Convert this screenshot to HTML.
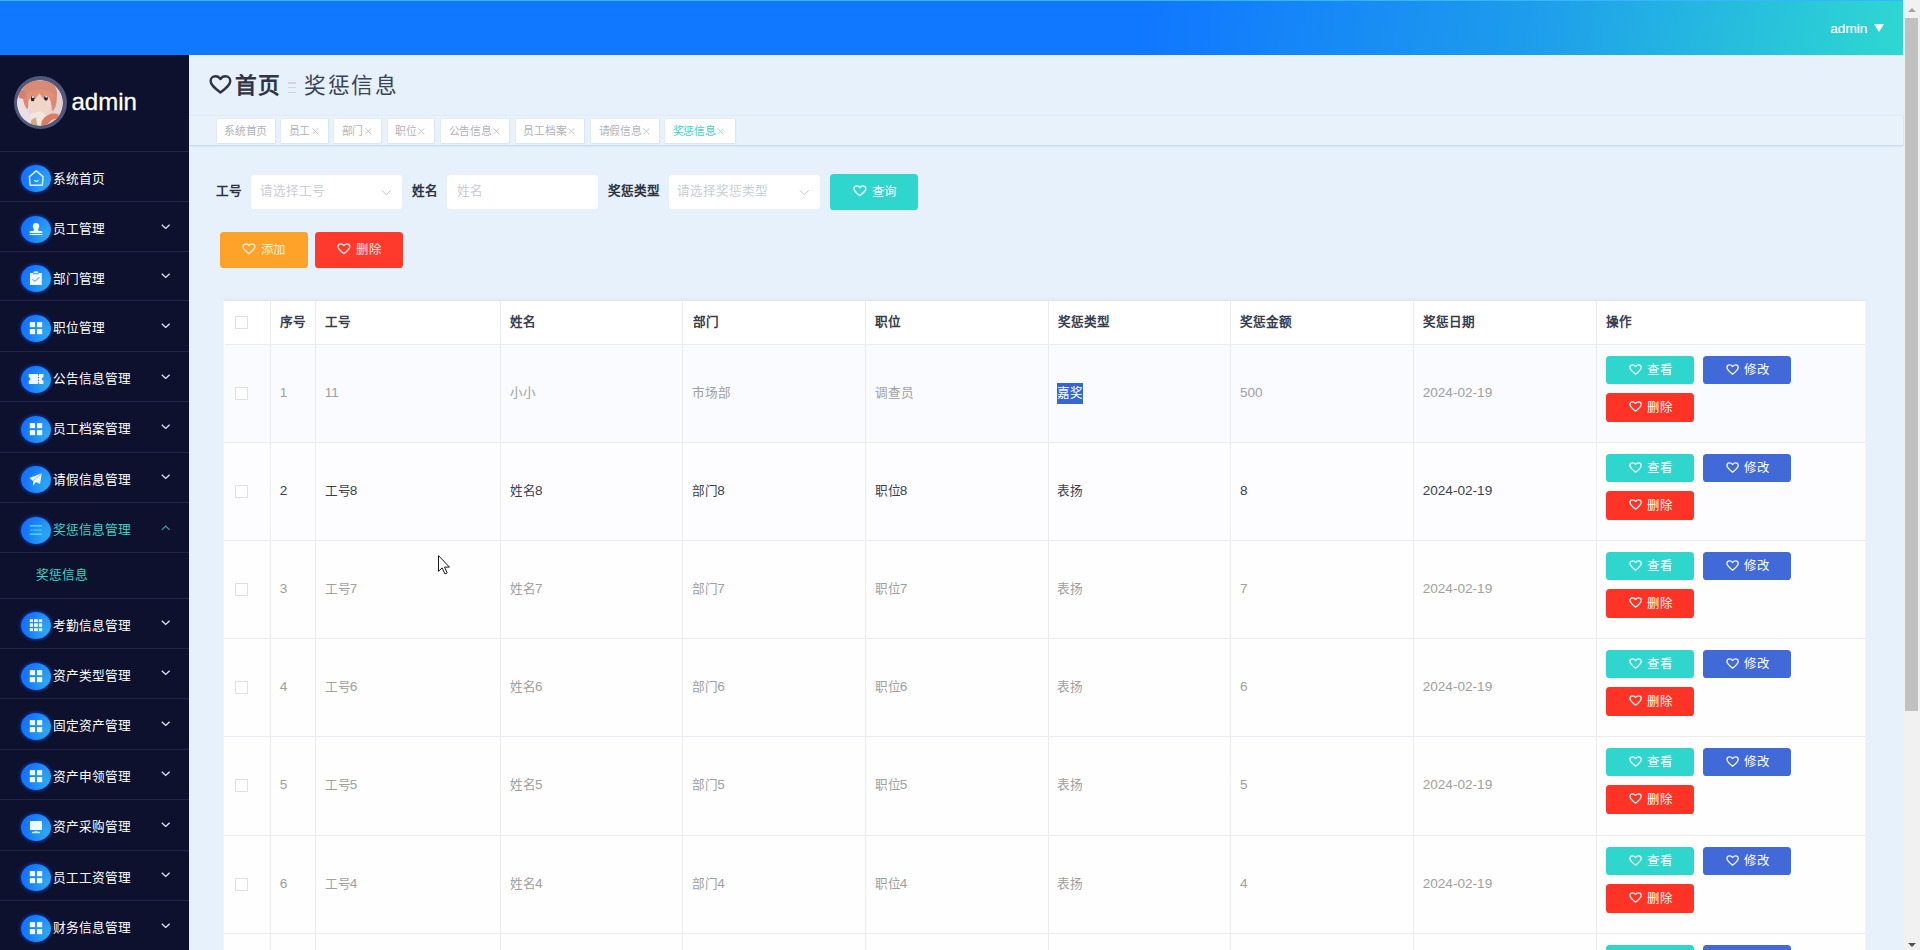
<!DOCTYPE html>
<html lang="zh-CN"><head><meta charset="utf-8"><title>奖惩信息</title>
<style>
*{box-sizing:border-box;margin:0;padding:0}
html,body{width:1920px;height:950px;overflow:hidden}
body{position:relative;background:#e6f1fb;font-family:"Liberation Sans",sans-serif;font-size:12.6px;color:#333}
.hdr{position:absolute;left:0;top:0;width:1903px;height:55px;background:linear-gradient(98deg,#1077ff 0%,#1077ff 60%,#1d9cec 80%,#2ed8d1 100%);border-top:1px solid #39b4ff}
.hu{position:absolute;left:1830.3px;top:19.7px;-webkit-text-stroke:.2px #fff;font-size:13.6px;line-height:16px;color:#fff}
.tri{position:absolute;left:1874px;top:23px;width:0;height:0;border-left:5.2px solid transparent;border-right:5.2px solid transparent;border-top:8px solid #fff}
.side{position:absolute;left:0;top:55px;width:189px;height:895px;background:#0d112d;overflow:hidden}
.ava{position:absolute;left:13.5px;top:20.8px;width:53.6px;height:53.6px;border-radius:50%;background:#52587a;padding:3.9px}
.face{display:block;width:100%;height:100%;border-radius:50%}
.uname{position:absolute;left:71.5px;top:31.6px;font-size:24px;line-height:30px;color:#fff;-webkit-text-stroke:.3px #fff}
.sep0{display:none}
.mi{position:absolute;left:0;width:189px;height:50px;border-top:1.3px solid #20254a;color:#fff}
.mi .ic{position:absolute;left:21.05px;top:13.5px;width:29.9px;height:27px;border-radius:50%;background:radial-gradient(ellipse 70% 75% at 88% 68%,#2ba7ee 0%,rgba(43,167,238,0) 100%),linear-gradient(100deg,#1371ff 0%,#197dff 50%,#2593f8 100%);box-shadow:0 0 3px 1.2px rgba(8,60,190,.75)}
.mi .ic svg{position:absolute;left:0;top:0;width:29.9px;height:27px}
.mi .mt{position:absolute;left:53.4px;top:17px;font-size:12.7px;line-height:20px;white-space:nowrap;font-weight:500;letter-spacing:-.1px}
.mi .chev{position:absolute;left:161.4px;top:21.4px;width:9.4px;height:5.6px;color:#e6e9f6}
.mi.act{color:#3ad5c6}
.mi.act .chev{color:#37a3a2;top:21.6px}
.sub{position:absolute;left:0;width:189px;height:45px;border-top:1.3px solid #20254a;color:#3ad5c6;padding-left:35.8px;font-size:12.7px;line-height:44px;white-space:nowrap}
.main{position:absolute;left:189px;top:55px;width:1715px;height:895px;overflow:hidden;background:#e6f1fb}
.bc{position:absolute;left:0;top:0;height:60px;width:100%}
.bh{position:absolute;left:19.7px;top:18.3px;width:22.9px;height:22.9px;color:#2f3445}
.b1{position:absolute;left:45.6px;top:14.6px;letter-spacing:1.7px;font-size:21.7px;line-height:32px;font-weight:700;color:#2f3446;white-space:nowrap}
.bsep{position:absolute;left:99.3px;top:27.4px;width:8px;height:14px}
.bsep i{display:block;height:1.2px;background:#cfd6e2;margin-bottom:3.6px}
.b2{position:absolute;left:115px;top:14.6px;letter-spacing:1.7px;font-size:21.7px;line-height:32px;color:#3c4256;white-space:nowrap}
.tabs{position:absolute;left:0;top:60px;width:1714px;height:30.4px;background:#e8f2fb;border-top:1px solid #e2edf8;box-shadow:0 1.2px 2px rgba(140,155,185,.36)}
.tab{position:absolute;top:3.2px;height:24.2px;background:#fff;box-shadow:0 0 1.5px .5px rgba(185,195,215,.8);font-size:10.8px;line-height:24px;color:#b0b3ba;white-space:nowrap;padding-left:7.5px;letter-spacing:-.2px}
.tab .x{display:inline-block;width:8.6px;height:8.6px;margin-left:.4px;vertical-align:-0.6px;color:#bcc0c7}
.tab.on{color:#3ed2c3}
.tab.on .x{color:#8fdcd4}
.flt{position:absolute;left:0;top:0;width:100%;height:0}
.lb{position:absolute;top:126px;font-weight:700;font-size:12.6px;line-height:20px;color:#2d3140;white-space:nowrap}
.inp{position:absolute;top:119.9px;height:33.9px;background:#fff;border-radius:3.6px;border:0;padding-left:8.8px;font-size:12.6px;line-height:33px;color:#cacdd4;white-space:nowrap}
.inp .dn{position:absolute;right:10.2px;top:14.4px;width:10.5px;height:7px}
.btn{position:absolute;height:35.7px;width:88px;border-radius:3.6px;color:#fff;font-size:12.6px;white-space:nowrap;display:flex;align-items:center;justify-content:center}
.btn .hrt{width:13.8px;height:13.8px;margin-right:4.9px;margin-left:-.6px;flex:none;position:relative;top:-.5px;opacity:.92}
.btn span{position:relative;top:-1px;font-weight:500;font-size:12.4px;letter-spacing:.9px;margin-right:-.9px}
.btn.s .hrt{top:-.4px;margin-left:.4px;width:13.2px;height:13.2px}
.btn.s span{top:.5px}
.btn.q{background:#2fd6cd;top:119px!important;padding-left:2px}
.btn.add{background:#ffa22a;top:177px!important;color:#fff1dc}
.btn.del{background:#ff3a2c;top:177px!important;color:#ffe6e2}
.tbl{position:absolute;left:35px;top:245px;width:1640.6px;box-shadow:-1px 0 1.5px rgba(255,255,255,.55),1px 0 1.5px rgba(255,255,255,.55),0 -1px 1.5px rgba(205,210,220,.45);height:660px;background:#fff;border-top:1px solid #e3e6ea;overflow:hidden}
.th{position:absolute;top:0;height:44px;background:#fff;border-bottom:1px solid #eaecf0;padding-left:9.9px;font-weight:700;color:#383d4e;line-height:42.4px;white-space:nowrap}
.tr{position:absolute;left:0;width:1641px;height:98.2px;border-bottom:1px solid #eaecf0;background:#fefefe;color:#a0a0a0}
.tr.r1{background:#fafbfe}
.tr.hov{color:#3a3f51;background:#fdfdff}
.td{position:absolute;top:0;height:97px;padding-left:9.3px;line-height:20.7px;padding-top:38.4px;white-space:nowrap}
.vl{position:absolute;top:0;width:1px;height:100%;background:#eaecf0}
.cb{position:absolute;left:10.3px;width:13px;height:12.8px;border:1px solid #dde0e6;background:#fff;border-radius:.5px}
.n{font-weight:inherit;font-size:13.6px}
.n.k{margin-left:-.9px}
.th .cb{top:15.2px}
.td .cb{top:42px}
.sel{background:#3367d1;color:#fff;display:inline-block;line-height:20.7px}
.ops .btn.s{width:88px;height:27.7px}
.ops .view{left:9.6px;top:11.2px;background:#2fd6cd}
.ops .edit{left:106.8px;top:11.2px;background:#4169d8}
.ops .btn.s.del2{left:9.6px;top:48.1px;background:#ff3326;height:28.6px}
.cursor{position:absolute;left:438px;top:555px;width:13px;height:20px}
.sb{position:absolute;left:1904px;top:0;width:16px;height:950px;background:#f1f1f1}
.sb .up{position:absolute;left:3.7px;top:7.8px;width:0;height:0;border-left:4px solid transparent;border-right:4px solid transparent;border-bottom:4.5px solid #a3a3a3}
.sb .down{position:absolute;left:3.7px;top:943.4px;width:0;height:0;border-left:4px solid transparent;border-right:4px solid transparent;border-top:4.5px solid #505050}
.sb .thumb{position:absolute;left:1px;top:18px;width:13px;height:693px;background:#c1c1c1}

</style></head>
<body>
<div class="hdr"><span class="hu">admin</span><span class="tri"></span></div>
<div class="side">
  <div class="ava"><svg class="face" viewBox="0 0 46 46"><defs><clipPath id="fc"><circle cx="23" cy="23" r="23"/></clipPath><filter id="bl" x="-10%" y="-10%" width="120%" height="120%"><feGaussianBlur stdDeviation=".8"/></filter><filter id="b2" x="-30%" y="-30%" width="160%" height="160%"><feGaussianBlur stdDeviation=".45"/></filter></defs><g clip-path="url(#fc)"><rect width="46" height="46" fill="#e6d6da"/><g filter="url(#bl)"><rect x="32" y="10" width="16" height="30" fill="#e5d2d0"/><path d="M-2 18 L9 18 L15 46 L-2 46 Z" fill="#eadfe6"/><path d="M6 16 C3 7 11 0 23 0.5 C35 0 42 7 40 17 C40 24 38.5 29 35.5 31.5 L34 22 L12.5 22 L10.5 29.5 C7.5 26.5 6 21 6 16 Z" fill="#d98a74"/><ellipse cx="5" cy="14.5" rx="3.4" ry="4.4" fill="#d57f68"/><ellipse cx="22.6" cy="23.6" rx="11.4" ry="10.4" fill="#f1d5c9"/><path d="M9.5 16.5 C12 8.5 31 6.5 37.5 16 L34.5 19.5 L30 14.5 L26.5 19 L22.5 13.5 L18 19.5 L15 14.5 L11 20.5 Z" fill="#df917a"/><path d="M14 33.5 L24 31.5 L33 38 L30 46 L12 46 Z" fill="#f4e5dd"/><path d="M25 41 C29.5 34.5 35.5 32.5 41.5 34.5 L42 39 C37 38 33 40.5 30 46 L24 46 Z" fill="#dd7c62"/><path d="M14.5 40 L19 37.5 L20.5 46 L13 46 Z" fill="#cdab84"/></g><g filter="url(#b2)"><ellipse cx="15.7" cy="18.6" rx="1.9" ry="2.7" fill="#34242f"/><ellipse cx="29.1" cy="18.2" rx="1.9" ry="2.7" fill="#34242f"/><ellipse cx="16" cy="17" rx="1.1" ry=".95" fill="#fbf5f6"/><ellipse cx="29.4" cy="16.6" rx="1.1" ry=".95" fill="#fbf5f6"/></g></g></svg></div>
  <div class="uname">admin</div>
  <div class="sep0"></div>
<div class="mi" style="top:95.65px"><span class="ic"><svg viewBox="0 0 30 27"><path d="M8.5 11.6 L15.3 5.9 L22.1 11.6 L21.4 20.2 L9.2 20.2 Z" fill="none" stroke="#d4f3ff" stroke-width="1.45" stroke-linejoin="round"/><path d="M13.4 15.6 Q15.3 17.2 17.2 15.6" fill="none" stroke="#d4f3ff" stroke-width="1.3" stroke-linecap="round"/></svg></span><span class="mt">系统首页</span></div>
<div class="mi" style="top:146.15px"><span class="ic"><svg viewBox="0 0 30 27"><g fill="#eefaff"><ellipse cx="15.1" cy="10.3" rx="3.2" ry="3.4"/><path d="M13 12 h4.2 v2 c0 .7 .5 1 1.6 1 h1.6 c.7 0 1 .4 1 1 v.9 H8.8 V16 c0 -.6 .3 -1 1 -1 h1.6 c1.1 0 1.6 -.3 1.6 -1 Z"/><rect x="8.8" y="17.9" width="12.6" height="1.15"/></g></svg></span><span class="mt">员工管理</span><svg class="chev" viewBox="0 0 10 6"><path d="M.8 .8 L5 4.8 L9.2 .8" fill="none" stroke="currentColor" stroke-width="1.35"/></svg></div>
<div class="mi" style="top:195.75px"><span class="ic"><svg viewBox="0 0 30 27"><rect x="9.05" y="8" width="11.8" height="12" fill="#eefaff"/><path d="M12.65 8.7 v-1.4 c0 -.8 .5 -1.2 1.2 -1.2 h2.2 c.7 0 1.2 .4 1.2 1.2 v1.4 Z" fill="#c9f3ff"/><path d="M11.9 8.75 h6.1" stroke="#2a6fd8" stroke-width=".8"/><path d="M11.8 14.6 l2.2 1.6 l4.2 -3.7" fill="none" stroke="#8ea9d6" stroke-width="1.1" stroke-linecap="round" stroke-linejoin="round"/></svg></span><span class="mt">部门管理</span><svg class="chev" viewBox="0 0 10 6"><path d="M.8 .8 L5 4.8 L9.2 .8" fill="none" stroke="currentColor" stroke-width="1.35"/></svg></div>
<div class="mi" style="top:245.25px"><span class="ic"><svg viewBox="0 0 30 27"><g fill="#eefaff"><rect x="8.85" y="7.1" width="5.3" height="5.1"/><rect x="16" y="7.1" width="5.3" height="5.1"/><rect x="8.85" y="14.1" width="5.3" height="5.1"/><rect x="16" y="14.1" width="5.3" height="5.1"/></g></svg></span><span class="mt">职位管理</span><svg class="chev" viewBox="0 0 10 6"><path d="M.8 .8 L5 4.8 L9.2 .8" fill="none" stroke="currentColor" stroke-width="1.35"/></svg></div>
<div class="mi" style="top:296.35px"><span class="ic"><svg viewBox="0 0 30 27"><path d="M7.8 8 h14.7 v3.3 a1.65 1.65 0 0 0 0 3.3 v3.3 h-14.7 v-3.3 a1.65 1.65 0 0 0 0 -3.3 Z" fill="#eefaff"/><path d="M17.5 8 v9.9" stroke="#2a55b8" stroke-width=".9" stroke-dasharray="1.5 1.3"/></svg></span><span class="mt">公告信息管理</span><svg class="chev" viewBox="0 0 10 6"><path d="M.8 .8 L5 4.8 L9.2 .8" fill="none" stroke="currentColor" stroke-width="1.35"/></svg></div>
<div class="mi" style="top:346.35px"><span class="ic"><svg viewBox="0 0 30 27"><g fill="#eefaff"><rect x="8.85" y="7.1" width="5.3" height="5.1"/><rect x="16" y="7.1" width="5.3" height="5.1"/><rect x="8.85" y="14.1" width="5.3" height="5.1"/><rect x="16" y="14.1" width="5.3" height="5.1"/></g></svg></span><span class="mt">员工档案管理</span><svg class="chev" viewBox="0 0 10 6"><path d="M.8 .8 L5 4.8 L9.2 .8" fill="none" stroke="currentColor" stroke-width="1.35"/></svg></div>
<div class="mi" style="top:396.95px"><span class="ic"><svg viewBox="0 0 30 27"><path d="M8.4 12.1 L20.9 7.2 L19.1 17.9 L15 15.9 L12.3 19.8 L12.1 14.9 Z" fill="#eefaff"/><path d="M20.3 7.9 L12.3 14.6" stroke="#5aa0e8" stroke-width=".7" fill="none"/><path d="M12.3 15.2 L14.8 16.3 L12.5 19.3 Z" fill="#cfeaff"/></svg></span><span class="mt">请假信息管理</span><svg class="chev" viewBox="0 0 10 6"><path d="M.8 .8 L5 4.8 L9.2 .8" fill="none" stroke="currentColor" stroke-width="1.35"/></svg></div>
<div class="mi act" style="top:447.35px"><span class="ic"><svg viewBox="0 0 30 27"><rect x="8.85" y="8" width="12.2" height="1.5" fill="#52d0ff"/><rect x="12.2" y="12.1" width="8.85" height="1.9" fill="#38b6ee"/><path d="M8.9 13 L11.4 11.3 L11.4 14.7 Z" fill="#38b6ee"/><rect x="8.85" y="16.5" width="12.2" height="1.5" fill="#52d0ff"/></svg></span><span class="mt">奖惩信息管理</span><svg class="chev" viewBox="0 0 10 6"><path d="M.8 5.2 L5 1.2 L9.2 5.2" fill="none" stroke="currentColor" stroke-width="1.35"/></svg></div>
<div class="sub" style="top:497.25px">奖惩信息</div>
<div class="mi" style="top:542.75px"><span class="ic"><svg viewBox="0 0 30 27"><g fill="#eefaff"><rect x="8.85" y="7.2" width="3.15" height="2.9"/><rect x="13.05" y="7.2" width="3.8" height="2.9"/><rect x="17.9" y="7.2" width="3.35" height="2.9"/><rect x="8.85" y="11.3" width="3.15" height="3.6"/><rect x="13.05" y="11.3" width="3.8" height="3.6"/><rect x="17.9" y="11.3" width="3.35" height="3.6"/><rect x="8.85" y="16.2" width="3.15" height="3.0"/><rect x="13.05" y="16.2" width="3.8" height="3.0"/><rect x="17.9" y="16.2" width="3.35" height="3.0"/></g></svg></span><span class="mt">考勤信息管理</span><svg class="chev" viewBox="0 0 10 6"><path d="M.8 .8 L5 4.8 L9.2 .8" fill="none" stroke="currentColor" stroke-width="1.35"/></svg></div>
<div class="mi" style="top:593.05px"><span class="ic"><svg viewBox="0 0 30 27"><g fill="#eefaff"><rect x="8.85" y="7.1" width="5.3" height="5.1"/><rect x="16" y="7.1" width="5.3" height="5.1"/><rect x="8.85" y="14.1" width="5.3" height="5.1"/><rect x="16" y="14.1" width="5.3" height="5.1"/></g></svg></span><span class="mt">资产类型管理</span><svg class="chev" viewBox="0 0 10 6"><path d="M.8 .8 L5 4.8 L9.2 .8" fill="none" stroke="currentColor" stroke-width="1.35"/></svg></div>
<div class="mi" style="top:643.35px"><span class="ic"><svg viewBox="0 0 30 27"><g fill="#eefaff"><rect x="8.85" y="7.1" width="5.3" height="5.1"/><rect x="16" y="7.1" width="5.3" height="5.1"/><rect x="8.85" y="14.1" width="5.3" height="5.1"/><rect x="16" y="14.1" width="5.3" height="5.1"/></g></svg></span><span class="mt">固定资产管理</span><svg class="chev" viewBox="0 0 10 6"><path d="M.8 .8 L5 4.8 L9.2 .8" fill="none" stroke="currentColor" stroke-width="1.35"/></svg></div>
<div class="mi" style="top:693.85px"><span class="ic"><svg viewBox="0 0 30 27"><g fill="#eefaff"><rect x="8.85" y="7.1" width="5.3" height="5.1"/><rect x="16" y="7.1" width="5.3" height="5.1"/><rect x="8.85" y="14.1" width="5.3" height="5.1"/><rect x="16" y="14.1" width="5.3" height="5.1"/></g></svg></span><span class="mt">资产申领管理</span><svg class="chev" viewBox="0 0 10 6"><path d="M.8 .8 L5 4.8 L9.2 .8" fill="none" stroke="currentColor" stroke-width="1.35"/></svg></div>
<div class="mi" style="top:744.25px"><span class="ic"><svg viewBox="0 0 30 27"><g fill="#eefaff"><rect x="9.05" y="7" width="12" height="9"/><path d="M10.95 19.2 v-1.5 h2.2 c.5 0 .7 -.3 .9 -.7 h2 c.2 .4 .4 .7 .9 .7 h2.2 v1.5 Z" fill="#bff4ff"/></g></svg></span><span class="mt">资产采购管理</span><svg class="chev" viewBox="0 0 10 6"><path d="M.8 .8 L5 4.8 L9.2 .8" fill="none" stroke="currentColor" stroke-width="1.35"/></svg></div>
<div class="mi" style="top:794.75px"><span class="ic"><svg viewBox="0 0 30 27"><g fill="#eefaff"><rect x="8.85" y="7.1" width="5.3" height="5.1"/><rect x="16" y="7.1" width="5.3" height="5.1"/><rect x="8.85" y="14.1" width="5.3" height="5.1"/><rect x="16" y="14.1" width="5.3" height="5.1"/></g></svg></span><span class="mt">员工工资管理</span><svg class="chev" viewBox="0 0 10 6"><path d="M.8 .8 L5 4.8 L9.2 .8" fill="none" stroke="currentColor" stroke-width="1.35"/></svg></div>
<div class="mi" style="top:845.15px"><span class="ic"><svg viewBox="0 0 30 27"><g fill="#eefaff"><rect x="8.85" y="7.1" width="5.3" height="5.1"/><rect x="16" y="7.1" width="5.3" height="5.1"/><rect x="8.85" y="14.1" width="5.3" height="5.1"/><rect x="16" y="14.1" width="5.3" height="5.1"/></g></svg></span><span class="mt">财务信息管理</span><svg class="chev" viewBox="0 0 10 6"><path d="M.8 .8 L5 4.8 L9.2 .8" fill="none" stroke="currentColor" stroke-width="1.35"/></svg></div>

</div>
<div class="main">
  <div class="bc"><svg class="bh" viewBox="0 0 24 24"><path d="M12 20.4 C5 15 1.7 12 1.7 8.3 C1.7 5.3 4 3.4 6.7 3.4 C8.9 3.4 10.8 4.5 12 6.4 C13.2 4.5 15.1 3.4 17.3 3.4 C20 3.4 22.3 5.3 22.3 8.3 C22.3 12 19 15 12 20.4 Z" fill="none" stroke="currentColor" stroke-width="2.5" stroke-linejoin="round"/></svg><span class="b1">首页</span><span class="bsep"><i></i><i></i><i></i></span><span class="b2">奖惩信息</span></div>
  <div class="tabs"><div class="tab" style="left:27.6px;width:58.4px"><span>系统首页</span></div><div class="tab" style="left:92.0px;width:47.1px"><span>员工</span><svg class="x" viewBox="0 0 10 10"><path d="M1.5 1.5 L8.5 8.5 M8.5 1.5 L1.5 8.5" stroke="currentColor" stroke-width="1" fill="none"/></svg></div><div class="tab" style="left:145.0px;width:47.2px"><span>部门</span><svg class="x" viewBox="0 0 10 10"><path d="M1.5 1.5 L8.5 8.5 M8.5 1.5 L1.5 8.5" stroke="currentColor" stroke-width="1" fill="none"/></svg></div><div class="tab" style="left:198.9px;width:46.3px"><span>职位</span><svg class="x" viewBox="0 0 10 10"><path d="M1.5 1.5 L8.5 8.5 M8.5 1.5 L1.5 8.5" stroke="currentColor" stroke-width="1" fill="none"/></svg></div><div class="tab" style="left:252.0px;width:68.2px"><span>公告信息</span><svg class="x" viewBox="0 0 10 10"><path d="M1.5 1.5 L8.5 8.5 M8.5 1.5 L1.5 8.5" stroke="currentColor" stroke-width="1" fill="none"/></svg></div><div class="tab" style="left:326.9px;width:68.2px"><span>员工档案</span><svg class="x" viewBox="0 0 10 10"><path d="M1.5 1.5 L8.5 8.5 M8.5 1.5 L1.5 8.5" stroke="currentColor" stroke-width="1" fill="none"/></svg></div><div class="tab" style="left:402.2px;width:67.8px"><span>请假信息</span><svg class="x" viewBox="0 0 10 10"><path d="M1.5 1.5 L8.5 8.5 M8.5 1.5 L1.5 8.5" stroke="currentColor" stroke-width="1" fill="none"/></svg></div><div class="tab on" style="left:476.0px;width:69.5px"><span>奖惩信息</span><svg class="x" viewBox="0 0 10 10"><path d="M1.5 1.5 L8.5 8.5 M8.5 1.5 L1.5 8.5" stroke="currentColor" stroke-width="1" fill="none"/></svg></div></div>
  <div class="flt">
    <span class="lb" style="left:27px">工号</span>
    <div class="inp" style="left:62px;width:151px"><span>请选择工号</span><svg class="dn" viewBox="0 0 12 8"><path d="M1 1.5 L6 6.5 L11 1.5" fill="none" stroke="#c0c4cc" stroke-width="1.1"/></svg></div>
    <span class="lb" style="left:223px">姓名</span>
    <div class="inp" style="left:257.8px;width:150.8px;padding-left:10.5px"><span>姓名</span></div>
    <span class="lb" style="left:419.3px">奖惩类型</span>
    <div class="inp" style="left:479.5px;width:151px"><span>请选择奖惩类型</span><svg class="dn" viewBox="0 0 12 8"><path d="M1 1.5 L6 6.5 L11 1.5" fill="none" stroke="#c0c4cc" stroke-width="1.1"/></svg></div>
    <div class="btn q" style="left:641px;top:174px"><svg class="hrt" viewBox="0 0 24 24"><path d="M12 20.4 C5 15 1.7 12 1.7 8.3 C1.7 5.3 4 3.4 6.7 3.4 C8.9 3.4 10.8 4.5 12 6.4 C13.2 4.5 15.1 3.4 17.3 3.4 C20 3.4 22.3 5.3 22.3 8.3 C22.3 12 19 15 12 20.4 Z" fill="none" stroke="currentColor" stroke-width="2.5" stroke-linejoin="round"/></svg><span>查询</span></div>
  </div>
  <div class="btn add" style="left:31px;top:232px"><svg class="hrt" viewBox="0 0 24 24"><path d="M12 20.4 C5 15 1.7 12 1.7 8.3 C1.7 5.3 4 3.4 6.7 3.4 C8.9 3.4 10.8 4.5 12 6.4 C13.2 4.5 15.1 3.4 17.3 3.4 C20 3.4 22.3 5.3 22.3 8.3 C22.3 12 19 15 12 20.4 Z" fill="none" stroke="currentColor" stroke-width="2.5" stroke-linejoin="round"/></svg><span>添加</span></div>
  <div class="btn del" style="left:126.4px;top:232px"><svg class="hrt" viewBox="0 0 24 24"><path d="M12 20.4 C5 15 1.7 12 1.7 8.3 C1.7 5.3 4 3.4 6.7 3.4 C8.9 3.4 10.8 4.5 12 6.4 C13.2 4.5 15.1 3.4 17.3 3.4 C20 3.4 22.3 5.3 22.3 8.3 C22.3 12 19 15 12 20.4 Z" fill="none" stroke="currentColor" stroke-width="2.5" stroke-linejoin="round"/></svg><span>删除</span></div>
  <div class="tbl"><div class="th" style="left:1.0px;width:45.4px"><span class="cb"></span></div><div class="th" style="left:46.4px;width:45.0px"><span class="ht">序号</span></div><div class="th" style="left:91.4px;width:185.2px"><span class="ht">工号</span></div><div class="th" style="left:276.6px;width:182.2px"><span class="ht">姓名</span></div><div class="th" style="left:458.8px;width:182.6px"><span class="ht">部门</span></div><div class="th" style="left:641.4px;width:182.6px"><span class="ht">职位</span></div><div class="th" style="left:824.0px;width:182.6px"><span class="ht">奖惩类型</span></div><div class="th" style="left:1006.6px;width:182.8px"><span class="ht">奖惩金额</span></div><div class="th" style="left:1189.4px;width:183.0px"><span class="ht">奖惩日期</span></div><div class="th" style="left:1372.4px;width:268.6px"><span class="ht">操作</span></div><div class="tr r1" style="top:44.00px;height:98.00px"><div class="td" style="left:1.0px;width:45.4px"><span class="cb"></span></div><div class="td" style="left:46.4px;width:45.0px"><span><b class="n">1</b></span></div><div class="td" style="left:91.4px;width:185.2px"><span><b class="n">11</b></span></div><div class="td" style="left:276.6px;width:182.2px"><span>小小</span></div><div class="td" style="left:458.8px;width:182.6px"><span>市场部</span></div><div class="td" style="left:641.4px;width:182.6px"><span>调查员</span></div><div class="td" style="left:824.0px;width:182.6px"><span class="sel">嘉奖</span></div><div class="td" style="left:1006.6px;width:182.8px"><span><b class="n">500</b></span></div><div class="td" style="left:1189.4px;width:183.0px"><span><b class="n">2024-02-19</b></span></div><div class="td ops" style="left:1372.4px;width:268.6px"><div class="btn s view"><svg class="hrt" viewBox="0 0 24 24"><path d="M12 20.4 C5 15 1.7 12 1.7 8.3 C1.7 5.3 4 3.4 6.7 3.4 C8.9 3.4 10.8 4.5 12 6.4 C13.2 4.5 15.1 3.4 17.3 3.4 C20 3.4 22.3 5.3 22.3 8.3 C22.3 12 19 15 12 20.4 Z" fill="none" stroke="currentColor" stroke-width="2.5" stroke-linejoin="round"/></svg><span>查看</span></div><div class="btn s edit"><svg class="hrt" viewBox="0 0 24 24"><path d="M12 20.4 C5 15 1.7 12 1.7 8.3 C1.7 5.3 4 3.4 6.7 3.4 C8.9 3.4 10.8 4.5 12 6.4 C13.2 4.5 15.1 3.4 17.3 3.4 C20 3.4 22.3 5.3 22.3 8.3 C22.3 12 19 15 12 20.4 Z" fill="none" stroke="currentColor" stroke-width="2.5" stroke-linejoin="round"/></svg><span>修改</span></div><div class="btn s del2"><svg class="hrt" viewBox="0 0 24 24"><path d="M12 20.4 C5 15 1.7 12 1.7 8.3 C1.7 5.3 4 3.4 6.7 3.4 C8.9 3.4 10.8 4.5 12 6.4 C13.2 4.5 15.1 3.4 17.3 3.4 C20 3.4 22.3 5.3 22.3 8.3 C22.3 12 19 15 12 20.4 Z" fill="none" stroke="currentColor" stroke-width="2.5" stroke-linejoin="round"/></svg><span>删除</span></div></div></div><div class="tr hov" style="top:142.00px;height:98.00px"><div class="td" style="left:1.0px;width:45.4px"><span class="cb"></span></div><div class="td" style="left:46.4px;width:45.0px"><span><b class="n">2</b></span></div><div class="td" style="left:91.4px;width:185.2px"><span>工号<b class="n k">8</b></span></div><div class="td" style="left:276.6px;width:182.2px"><span>姓名<b class="n k">8</b></span></div><div class="td" style="left:458.8px;width:182.6px"><span>部门<b class="n k">8</b></span></div><div class="td" style="left:641.4px;width:182.6px"><span>职位<b class="n k">8</b></span></div><div class="td" style="left:824.0px;width:182.6px"><span>表扬</span></div><div class="td" style="left:1006.6px;width:182.8px"><span><b class="n">8</b></span></div><div class="td" style="left:1189.4px;width:183.0px"><span><b class="n">2024-02-19</b></span></div><div class="td ops" style="left:1372.4px;width:268.6px"><div class="btn s view"><svg class="hrt" viewBox="0 0 24 24"><path d="M12 20.4 C5 15 1.7 12 1.7 8.3 C1.7 5.3 4 3.4 6.7 3.4 C8.9 3.4 10.8 4.5 12 6.4 C13.2 4.5 15.1 3.4 17.3 3.4 C20 3.4 22.3 5.3 22.3 8.3 C22.3 12 19 15 12 20.4 Z" fill="none" stroke="currentColor" stroke-width="2.5" stroke-linejoin="round"/></svg><span>查看</span></div><div class="btn s edit"><svg class="hrt" viewBox="0 0 24 24"><path d="M12 20.4 C5 15 1.7 12 1.7 8.3 C1.7 5.3 4 3.4 6.7 3.4 C8.9 3.4 10.8 4.5 12 6.4 C13.2 4.5 15.1 3.4 17.3 3.4 C20 3.4 22.3 5.3 22.3 8.3 C22.3 12 19 15 12 20.4 Z" fill="none" stroke="currentColor" stroke-width="2.5" stroke-linejoin="round"/></svg><span>修改</span></div><div class="btn s del2"><svg class="hrt" viewBox="0 0 24 24"><path d="M12 20.4 C5 15 1.7 12 1.7 8.3 C1.7 5.3 4 3.4 6.7 3.4 C8.9 3.4 10.8 4.5 12 6.4 C13.2 4.5 15.1 3.4 17.3 3.4 C20 3.4 22.3 5.3 22.3 8.3 C22.3 12 19 15 12 20.4 Z" fill="none" stroke="currentColor" stroke-width="2.5" stroke-linejoin="round"/></svg><span>删除</span></div></div></div><div class="tr" style="top:240.00px;height:98.00px"><div class="td" style="left:1.0px;width:45.4px"><span class="cb"></span></div><div class="td" style="left:46.4px;width:45.0px"><span><b class="n">3</b></span></div><div class="td" style="left:91.4px;width:185.2px"><span>工号<b class="n k">7</b></span></div><div class="td" style="left:276.6px;width:182.2px"><span>姓名<b class="n k">7</b></span></div><div class="td" style="left:458.8px;width:182.6px"><span>部门<b class="n k">7</b></span></div><div class="td" style="left:641.4px;width:182.6px"><span>职位<b class="n k">7</b></span></div><div class="td" style="left:824.0px;width:182.6px"><span>表扬</span></div><div class="td" style="left:1006.6px;width:182.8px"><span><b class="n">7</b></span></div><div class="td" style="left:1189.4px;width:183.0px"><span><b class="n">2024-02-19</b></span></div><div class="td ops" style="left:1372.4px;width:268.6px"><div class="btn s view"><svg class="hrt" viewBox="0 0 24 24"><path d="M12 20.4 C5 15 1.7 12 1.7 8.3 C1.7 5.3 4 3.4 6.7 3.4 C8.9 3.4 10.8 4.5 12 6.4 C13.2 4.5 15.1 3.4 17.3 3.4 C20 3.4 22.3 5.3 22.3 8.3 C22.3 12 19 15 12 20.4 Z" fill="none" stroke="currentColor" stroke-width="2.5" stroke-linejoin="round"/></svg><span>查看</span></div><div class="btn s edit"><svg class="hrt" viewBox="0 0 24 24"><path d="M12 20.4 C5 15 1.7 12 1.7 8.3 C1.7 5.3 4 3.4 6.7 3.4 C8.9 3.4 10.8 4.5 12 6.4 C13.2 4.5 15.1 3.4 17.3 3.4 C20 3.4 22.3 5.3 22.3 8.3 C22.3 12 19 15 12 20.4 Z" fill="none" stroke="currentColor" stroke-width="2.5" stroke-linejoin="round"/></svg><span>修改</span></div><div class="btn s del2"><svg class="hrt" viewBox="0 0 24 24"><path d="M12 20.4 C5 15 1.7 12 1.7 8.3 C1.7 5.3 4 3.4 6.7 3.4 C8.9 3.4 10.8 4.5 12 6.4 C13.2 4.5 15.1 3.4 17.3 3.4 C20 3.4 22.3 5.3 22.3 8.3 C22.3 12 19 15 12 20.4 Z" fill="none" stroke="currentColor" stroke-width="2.5" stroke-linejoin="round"/></svg><span>删除</span></div></div></div><div class="tr" style="top:338.00px;height:98.00px"><div class="td" style="left:1.0px;width:45.4px"><span class="cb"></span></div><div class="td" style="left:46.4px;width:45.0px"><span><b class="n">4</b></span></div><div class="td" style="left:91.4px;width:185.2px"><span>工号<b class="n k">6</b></span></div><div class="td" style="left:276.6px;width:182.2px"><span>姓名<b class="n k">6</b></span></div><div class="td" style="left:458.8px;width:182.6px"><span>部门<b class="n k">6</b></span></div><div class="td" style="left:641.4px;width:182.6px"><span>职位<b class="n k">6</b></span></div><div class="td" style="left:824.0px;width:182.6px"><span>表扬</span></div><div class="td" style="left:1006.6px;width:182.8px"><span><b class="n">6</b></span></div><div class="td" style="left:1189.4px;width:183.0px"><span><b class="n">2024-02-19</b></span></div><div class="td ops" style="left:1372.4px;width:268.6px"><div class="btn s view"><svg class="hrt" viewBox="0 0 24 24"><path d="M12 20.4 C5 15 1.7 12 1.7 8.3 C1.7 5.3 4 3.4 6.7 3.4 C8.9 3.4 10.8 4.5 12 6.4 C13.2 4.5 15.1 3.4 17.3 3.4 C20 3.4 22.3 5.3 22.3 8.3 C22.3 12 19 15 12 20.4 Z" fill="none" stroke="currentColor" stroke-width="2.5" stroke-linejoin="round"/></svg><span>查看</span></div><div class="btn s edit"><svg class="hrt" viewBox="0 0 24 24"><path d="M12 20.4 C5 15 1.7 12 1.7 8.3 C1.7 5.3 4 3.4 6.7 3.4 C8.9 3.4 10.8 4.5 12 6.4 C13.2 4.5 15.1 3.4 17.3 3.4 C20 3.4 22.3 5.3 22.3 8.3 C22.3 12 19 15 12 20.4 Z" fill="none" stroke="currentColor" stroke-width="2.5" stroke-linejoin="round"/></svg><span>修改</span></div><div class="btn s del2"><svg class="hrt" viewBox="0 0 24 24"><path d="M12 20.4 C5 15 1.7 12 1.7 8.3 C1.7 5.3 4 3.4 6.7 3.4 C8.9 3.4 10.8 4.5 12 6.4 C13.2 4.5 15.1 3.4 17.3 3.4 C20 3.4 22.3 5.3 22.3 8.3 C22.3 12 19 15 12 20.4 Z" fill="none" stroke="currentColor" stroke-width="2.5" stroke-linejoin="round"/></svg><span>删除</span></div></div></div><div class="tr" style="top:436.00px;height:99.00px"><div class="td" style="left:1.0px;width:45.4px"><span class="cb"></span></div><div class="td" style="left:46.4px;width:45.0px"><span><b class="n">5</b></span></div><div class="td" style="left:91.4px;width:185.2px"><span>工号<b class="n k">5</b></span></div><div class="td" style="left:276.6px;width:182.2px"><span>姓名<b class="n k">5</b></span></div><div class="td" style="left:458.8px;width:182.6px"><span>部门<b class="n k">5</b></span></div><div class="td" style="left:641.4px;width:182.6px"><span>职位<b class="n k">5</b></span></div><div class="td" style="left:824.0px;width:182.6px"><span>表扬</span></div><div class="td" style="left:1006.6px;width:182.8px"><span><b class="n">5</b></span></div><div class="td" style="left:1189.4px;width:183.0px"><span><b class="n">2024-02-19</b></span></div><div class="td ops" style="left:1372.4px;width:268.6px"><div class="btn s view"><svg class="hrt" viewBox="0 0 24 24"><path d="M12 20.4 C5 15 1.7 12 1.7 8.3 C1.7 5.3 4 3.4 6.7 3.4 C8.9 3.4 10.8 4.5 12 6.4 C13.2 4.5 15.1 3.4 17.3 3.4 C20 3.4 22.3 5.3 22.3 8.3 C22.3 12 19 15 12 20.4 Z" fill="none" stroke="currentColor" stroke-width="2.5" stroke-linejoin="round"/></svg><span>查看</span></div><div class="btn s edit"><svg class="hrt" viewBox="0 0 24 24"><path d="M12 20.4 C5 15 1.7 12 1.7 8.3 C1.7 5.3 4 3.4 6.7 3.4 C8.9 3.4 10.8 4.5 12 6.4 C13.2 4.5 15.1 3.4 17.3 3.4 C20 3.4 22.3 5.3 22.3 8.3 C22.3 12 19 15 12 20.4 Z" fill="none" stroke="currentColor" stroke-width="2.5" stroke-linejoin="round"/></svg><span>修改</span></div><div class="btn s del2"><svg class="hrt" viewBox="0 0 24 24"><path d="M12 20.4 C5 15 1.7 12 1.7 8.3 C1.7 5.3 4 3.4 6.7 3.4 C8.9 3.4 10.8 4.5 12 6.4 C13.2 4.5 15.1 3.4 17.3 3.4 C20 3.4 22.3 5.3 22.3 8.3 C22.3 12 19 15 12 20.4 Z" fill="none" stroke="currentColor" stroke-width="2.5" stroke-linejoin="round"/></svg><span>删除</span></div></div></div><div class="tr" style="top:535.00px;height:98.00px"><div class="td" style="left:1.0px;width:45.4px"><span class="cb"></span></div><div class="td" style="left:46.4px;width:45.0px"><span><b class="n">6</b></span></div><div class="td" style="left:91.4px;width:185.2px"><span>工号<b class="n k">4</b></span></div><div class="td" style="left:276.6px;width:182.2px"><span>姓名<b class="n k">4</b></span></div><div class="td" style="left:458.8px;width:182.6px"><span>部门<b class="n k">4</b></span></div><div class="td" style="left:641.4px;width:182.6px"><span>职位<b class="n k">4</b></span></div><div class="td" style="left:824.0px;width:182.6px"><span>表扬</span></div><div class="td" style="left:1006.6px;width:182.8px"><span><b class="n">4</b></span></div><div class="td" style="left:1189.4px;width:183.0px"><span><b class="n">2024-02-19</b></span></div><div class="td ops" style="left:1372.4px;width:268.6px"><div class="btn s view"><svg class="hrt" viewBox="0 0 24 24"><path d="M12 20.4 C5 15 1.7 12 1.7 8.3 C1.7 5.3 4 3.4 6.7 3.4 C8.9 3.4 10.8 4.5 12 6.4 C13.2 4.5 15.1 3.4 17.3 3.4 C20 3.4 22.3 5.3 22.3 8.3 C22.3 12 19 15 12 20.4 Z" fill="none" stroke="currentColor" stroke-width="2.5" stroke-linejoin="round"/></svg><span>查看</span></div><div class="btn s edit"><svg class="hrt" viewBox="0 0 24 24"><path d="M12 20.4 C5 15 1.7 12 1.7 8.3 C1.7 5.3 4 3.4 6.7 3.4 C8.9 3.4 10.8 4.5 12 6.4 C13.2 4.5 15.1 3.4 17.3 3.4 C20 3.4 22.3 5.3 22.3 8.3 C22.3 12 19 15 12 20.4 Z" fill="none" stroke="currentColor" stroke-width="2.5" stroke-linejoin="round"/></svg><span>修改</span></div><div class="btn s del2"><svg class="hrt" viewBox="0 0 24 24"><path d="M12 20.4 C5 15 1.7 12 1.7 8.3 C1.7 5.3 4 3.4 6.7 3.4 C8.9 3.4 10.8 4.5 12 6.4 C13.2 4.5 15.1 3.4 17.3 3.4 C20 3.4 22.3 5.3 22.3 8.3 C22.3 12 19 15 12 20.4 Z" fill="none" stroke="currentColor" stroke-width="2.5" stroke-linejoin="round"/></svg><span>删除</span></div></div></div><div class="tr" style="top:633.00px;height:98.00px"><div class="td" style="left:1.0px;width:45.4px"><span class="cb"></span></div><div class="td" style="left:46.4px;width:45.0px"><span><b class="n">7</b></span></div><div class="td" style="left:91.4px;width:185.2px"><span>工号<b class="n k">3</b></span></div><div class="td" style="left:276.6px;width:182.2px"><span>姓名<b class="n k">3</b></span></div><div class="td" style="left:458.8px;width:182.6px"><span>部门<b class="n k">3</b></span></div><div class="td" style="left:641.4px;width:182.6px"><span>职位<b class="n k">3</b></span></div><div class="td" style="left:824.0px;width:182.6px"><span>表扬</span></div><div class="td" style="left:1006.6px;width:182.8px"><span><b class="n">3</b></span></div><div class="td" style="left:1189.4px;width:183.0px"><span><b class="n">2024-02-19</b></span></div><div class="td ops" style="left:1372.4px;width:268.6px"><div class="btn s view"><svg class="hrt" viewBox="0 0 24 24"><path d="M12 20.4 C5 15 1.7 12 1.7 8.3 C1.7 5.3 4 3.4 6.7 3.4 C8.9 3.4 10.8 4.5 12 6.4 C13.2 4.5 15.1 3.4 17.3 3.4 C20 3.4 22.3 5.3 22.3 8.3 C22.3 12 19 15 12 20.4 Z" fill="none" stroke="currentColor" stroke-width="2.5" stroke-linejoin="round"/></svg><span>查看</span></div><div class="btn s edit"><svg class="hrt" viewBox="0 0 24 24"><path d="M12 20.4 C5 15 1.7 12 1.7 8.3 C1.7 5.3 4 3.4 6.7 3.4 C8.9 3.4 10.8 4.5 12 6.4 C13.2 4.5 15.1 3.4 17.3 3.4 C20 3.4 22.3 5.3 22.3 8.3 C22.3 12 19 15 12 20.4 Z" fill="none" stroke="currentColor" stroke-width="2.5" stroke-linejoin="round"/></svg><span>修改</span></div><div class="btn s del2"><svg class="hrt" viewBox="0 0 24 24"><path d="M12 20.4 C5 15 1.7 12 1.7 8.3 C1.7 5.3 4 3.4 6.7 3.4 C8.9 3.4 10.8 4.5 12 6.4 C13.2 4.5 15.1 3.4 17.3 3.4 C20 3.4 22.3 5.3 22.3 8.3 C22.3 12 19 15 12 20.4 Z" fill="none" stroke="currentColor" stroke-width="2.5" stroke-linejoin="round"/></svg><span>删除</span></div></div></div><div class="vl" style="left:45.9px"></div><div class="vl" style="left:90.9px"></div><div class="vl" style="left:276.1px"></div><div class="vl" style="left:458.3px"></div><div class="vl" style="left:640.9px"></div><div class="vl" style="left:823.5px"></div><div class="vl" style="left:1006.1px"></div><div class="vl" style="left:1188.9px"></div><div class="vl" style="left:1371.9px"></div></div>
</div>
<svg class="cursor" viewBox="0 0 13 20"><path d="M0.5 0.6 L0.5 16.3 L4.1 12.9 L6.9 18.9 L9.2 17.9 L6.5 12.1 L11.4 12.1 Z" fill="#fff" stroke="#1a1a1a" stroke-width="1" stroke-linejoin="miter"/></svg>
<div class="sb"><div class="up"></div><div class="thumb"></div><div class="down"></div></div>
</body></html>
